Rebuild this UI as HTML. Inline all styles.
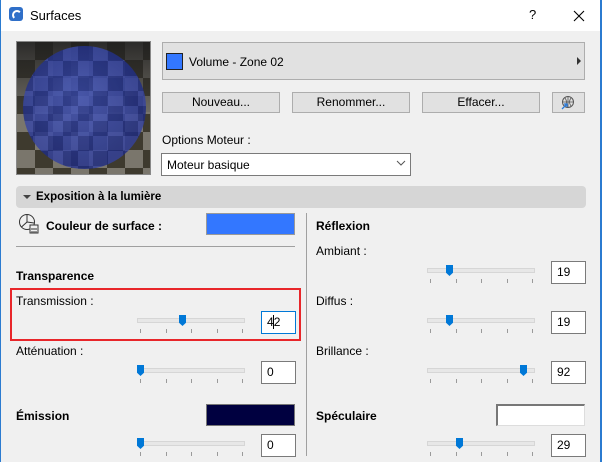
<!DOCTYPE html>
<html><head><meta charset="utf-8"><style>
*{margin:0;padding:0;box-sizing:border-box}
body{width:602px;height:462px;background:#f0f0f0;font-family:"Liberation Sans",sans-serif;font-size:12px;color:#000;position:relative;overflow:hidden}
.a{position:absolute;white-space:nowrap}
.b{font-weight:bold}
.btn{position:absolute;background:#e1e1e1;border:1px solid #adadad;text-align:center;line-height:18px;font-size:12px}
.inp{position:absolute;background:#fff;border:1px solid #7a7a7a;padding-left:5px;line-height:20px;font-size:12px}
.track{position:absolute;height:5px;background:#e7e7e7;border:1px solid #d6d6d6;width:108px}
.thumb{position:absolute;width:7px;height:11px;background:#0078d7;clip-path:polygon(0 0,100% 0,100% 70%,50% 100%,0 70%)}
.tick{position:absolute;width:1px;height:4px;background:#9a9a9a}
</style></head><body>
<div class="a" style="left:0;top:0;width:602px;height:31px;background:#fff"></div>
<div class="a" style="left:0;top:0;width:1px;height:462px;background:#2b7bd0"></div>
<div class="a" style="left:600px;top:0;width:2px;height:462px;background:#2b7bd0"></div>
<div class="a" style="left:9px;top:7px;width:14px;height:14px;background:#2f6fc8;border-radius:3px"><div style="position:absolute;left:3px;top:3px;width:10px;height:10px;border:2px solid #fff;border-radius:50%;border-right-color:transparent;border-bottom-color:transparent"></div></div>
<div class="a" style="left:30px;top:8px;font-size:13px">Surfaces</div>
<div class="a" style="left:529px;top:7px;font-size:13px">?</div>
<svg class="a" style="left:573px;top:10px" width="12" height="12"><path d="M1 1L11 11M11 1L1 11" stroke="#000" stroke-width="1.1"/></svg>

<div class="a" style="left:16px;top:41px;width:135px;height:134px;border:1px solid #888;overflow:hidden;background:repeating-conic-gradient(#3e3a2e 0 25%,#7a766c 0 50%) 0 0/36px 36px">
<div style="position:absolute;left:0;top:0;width:135px;height:70px;background:linear-gradient(rgba(30,30,30,.85),rgba(60,60,60,.2))"></div>
<div style="position:absolute;left:6px;top:4px;width:123px;height:123px;border-radius:50%;background:radial-gradient(circle at 45% 40%,rgba(60,80,190,.8),rgba(35,50,150,.8) 70%,rgba(40,55,140,.85));"></div>
<div style="position:absolute;left:6px;top:4px;width:123px;height:123px;border-radius:50%;background:repeating-conic-gradient(rgba(0,0,0,.12) 0 25%,rgba(255,255,255,.06) 0 50%) 10px 0/30px 30px"></div>
</div>

<div class="a" style="left:162px;top:42px;width:423px;height:38px;background:#e1e1e1;border:1px solid #adadad"></div>
<div class="a" style="left:166px;top:53px;width:17px;height:17px;background:#3377ff;border:1px solid #222"></div>
<div class="a" style="left:189px;top:55px">Volume - Zone 02</div>
<div class="a" style="left:577px;top:57px;width:0;height:0;border-left:4px solid #333;border-top:4px solid transparent;border-bottom:4px solid transparent"></div>

<div class="btn" style="left:162px;top:92px;width:118px;height:21px">Nouveau...</div>
<div class="btn" style="left:292px;top:92px;width:118px;height:21px">Renommer...</div>
<div class="btn" style="left:422px;top:92px;width:118px;height:21px">Effacer...</div>
<div class="btn" style="left:552px;top:92px;width:33px;height:21px"></div>
<svg class="a" style="left:560px;top:95px" width="16" height="16"><circle cx="8" cy="7" r="5.5" fill="none" stroke="#555"/><path d="M2.5 7H13.5M8 1.5V12.5M5 3Q8 7 5 11M11 3Q8 7 11 11" stroke="#555" fill="none" stroke-width=".8"/><path d="M2 14L7 9M4 9H7V12" stroke="#2a7bdc" fill="none" stroke-width="1.3"/></svg>

<div class="a" style="left:162px;top:133px">Options Moteur :</div>
<div class="a" style="left:161px;top:153px;width:250px;height:23px;background:#fff;border:1px solid #7a7a7a"></div>
<div class="a" style="left:167px;top:158px">Moteur basique</div>
<svg class="a" style="left:396px;top:160px" width="10" height="6"><path d="M1 1L5 5L9 1" stroke="#555" fill="none"/></svg>

<div class="a" style="left:16px;top:186px;width:570px;height:22px;background:#d6d6d6;border-radius:4px"></div>
<div class="a" style="left:23px;top:195px;width:0;height:0;border-top:4px solid #444;border-left:4px solid transparent;border-right:4px solid transparent"></div>
<div class="a b" style="left:36px;top:191px;font-size:11.5px">Exposition à la lumière</div>
<div class="a" style="left:306px;top:213px;width:1px;height:243px;background:#a0a0a0"></div>

<svg class="a" style="left:18px;top:213px" width="22" height="22"><circle cx="9" cy="9" r="7.5" fill="none" stroke="#333"/><path d="M9 1.5V9L3.5 14M9 9L16 10" stroke="#333" fill="none"/><rect x="12" y="12" width="8" height="8" fill="#f0f0f0" stroke="#333"/><path d="M13 16H19M14 18V20M16 18V20M18 18V20" stroke="#333"/></svg>
<div class="a b" style="left:46px;top:219px">Couleur de surface :</div>
<div class="a" style="left:206px;top:213px;width:89px;height:22px;background:#3377ff;border:1px solid #999"></div>
<div class="a" style="left:16px;top:246px;width:279px;height:1px;background:#a0a0a0"></div>
<div class="a b" style="left:16px;top:269px">Transparence</div>
<div class="a" style="left:10px;top:288px;width:291px;height:53px;border:2px solid #e8262a"></div>

<div class="a" style="left:16px;top:294px">Transmission :</div>
<div class="a" style="left:16px;top:344px">Atténuation :</div>
<div class="a b" style="left:16px;top:409px">Émission</div>
<div class="a" style="left:206px;top:404px;width:89px;height:22px;background:#000040;border:1px solid #777"></div>

<div class="a b" style="left:316px;top:219px">Réflexion</div>
<div class="a" style="left:316px;top:244px">Ambiant :</div>
<div class="a" style="left:316px;top:294px">Diffus :</div>
<div class="a" style="left:316px;top:344px">Brillance :</div>
<div class="a b" style="left:316px;top:409px">Spéculaire</div>
<div class="a" style="left:496px;top:404px;width:89px;height:22px;background:#fff;border:1px solid #ddd;border-top:2px solid #777;border-left:2px solid #777"></div>

<div id="s"></div>
<div class="inp" style="left:261px;top:311px;width:35px;height:23px;border-color:#0078d7">4<span style="display:inline-block;width:1px;height:14px;background:#000;vertical-align:-3px;margin-left:-1px"></span>2</div>
<div class="inp" style="left:261px;top:361px;width:35px;height:23px">0</div>
<div class="inp" style="left:261px;top:434px;width:35px;height:23px">0</div>
<div class="inp" style="left:551px;top:261px;width:35px;height:23px">19</div>
<div class="inp" style="left:551px;top:311px;width:35px;height:23px">19</div>
<div class="inp" style="left:551px;top:361px;width:35px;height:23px">92</div>
<div class="inp" style="left:551px;top:434px;width:35px;height:23px">29</div>

<script>
var S=[[137,318,182],[137,368,140],[137,441,140],[427,268,449],[427,318,449],[427,368,523],[427,441,459]],h='';
S.forEach(function(s){h+='<div class="track" style="left:'+s[0]+'px;top:'+s[1]+'px"></div>';
for(var i=0;i<5;i++)h+='<div class="tick" style="left:'+(s[0]+3+i*25.5)+'px;top:'+(s[1]+11)+'px"></div>';
h+='<div class="thumb" style="left:'+(s[2]-3)+'px;top:'+(s[1]-3)+'px"></div>';});
document.getElementById('s').innerHTML=h;
</script>
</body></html>
